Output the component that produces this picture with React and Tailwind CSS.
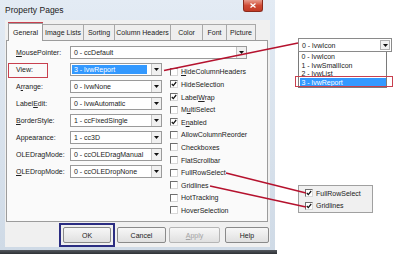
import React from "react";

const F = "font-['Liberation_Sans',Arial,sans-serif]";

function Arrow() {
  return (
    <svg width="5" height="3" viewBox="0 0 5 3">
      <path d="M0 0H5L2.5 3Z" fill="#111" />
    </svg>
  );
}

function Combo({ text, w, selected }) {
  return (
    <div className={`h-[13px] ${w} bg-white border border-[#9a9a9a] flex items-stretch`}>
      <div className="flex-1 flex items-stretch p-[1px] pr-[4px] min-w-0">
        <span
          className={`flex items-center pl-[2px] text-[7px] leading-none whitespace-nowrap ${
            selected ? "flex-1 bg-[#3399ff] text-white" : "text-[#222]"
          }`}
        >
          {text}
        </span>
      </div>
      <div className="w-[10px] bg-[#f0f0f0] border-l border-[#c4c4c4] flex items-center justify-center">
        <Arrow />
      </div>
    </div>
  );
}

function Check({ checked }) {
  return (
    <div className="w-[8px] h-[8px] bg-white border-t border-l border-[#6e6e6e] border-r border-b border-r-[#d8d8d8] border-b-[#d8d8d8] flex items-center justify-center shrink-0">
      {checked && (
        <svg width="6" height="6" viewBox="0 0 6 6">
          <path d="M0.8 3L2.3 4.6L5.2 1" stroke="#111" strokeWidth="1.2" fill="none" />
        </svg>
      )}
    </div>
  );
}

const leftRows = [
  { label: <><span>V</span>iew:</>, text: "3 - lvwReport", selected: true },
  { label: <>A<u>r</u>range:</>, text: "0 - lvwNone" },
  { label: <>Label<u>E</u>dit:</>, text: "0 - lvwAutomatic" },
  { label: <><u>B</u>orderStyle:</>, text: "1 - ccFixedSingle" },
  { label: <>Appearance:</>, text: "1 - cc3D" },
  { label: <>OLEDragMode:</>, text: "0 - ccOLEDragManual" },
  { label: <><u>O</u>LEDropMode:</>, text: "0 - ccOLEDropNone" },
];

const checks = [
  { label: <><u>H</u>ideColumnHeaders</>, c: false },
  { label: <>HideSelection</>, c: true },
  { label: <>Label<u>W</u>rap</>, c: true },
  { label: <>M<u>u</u>ltiSelect</>, c: false },
  { label: <>E<u>n</u>abled</>, c: true },
  { label: <>AllowColumnReorder</>, c: false },
  { label: <>Checkboxes</>, c: false },
  { label: <>FlatScrollbar</>, c: false },
  { label: <>FullRowSelect</>, c: false },
  { label: <>Gridlines</>, c: false },
  { label: <>HotTracking</>, c: false },
  { label: <>HoverSelection</>, c: false },
];

const tabs = [
  ["Image Lists", "w-[41px]"],
  ["Sorting", "w-[31px]"],
  ["Column Headers", "w-[56px]"],
  ["Color", "w-[32px]"],
  ["Font", "w-[24px]"],
  ["Picture", "w-[29px]"],
];

function Btn({ children, w, disabled }) {
  return (
    <div
      className={`h-[16px] ${w} rounded-[2px] border ${
        disabled ? "border-[#b5b5b5] text-[#a3a3a3]" : "border-[#8a8a8a] text-[#222]"
      } bg-gradient-to-b from-[#f7f7f7] to-[#e0e0e0] flex items-center justify-center text-[7px] leading-none`}
    >
      {children}
    </div>
  );
}

export default function App() {
  return (
    <div className={`relative w-[400px] h-[254px] bg-white overflow-hidden ${F}`}>
      <div className="flex flex-col w-[277px]">
        <div className="w-[275px] h-[250px] bg-gradient-to-b from-[#e3ebf4] to-[#cfdae6] flex flex-col">
          {/* title bar */}
          <div className="h-[20px] flex items-start">
            <span className="flex-1 pl-[5px] mt-[5px] text-[8.5px] leading-[10px] text-[#222]">Property Pages</span>
            <div className="mr-[12px] w-[20px] h-[12px] rounded-b-[3px] bg-gradient-to-b from-[#e79a8c] via-[#cf4b36] to-[#c23b26] border border-t-0 border-[#8c2a1c] flex items-center justify-center">
              <svg width="6" height="5" viewBox="0 0 6 5">
                <path d="M0.5 0.5L5.5 4.5M5.5 0.5L0.5 4.5" stroke="white" strokeWidth="1.3" />
              </svg>
            </div>
          </div>
          {/* body */}
          <div className="mx-[5px] h-[227px] bg-[#f0f0f0] flex flex-col">
            <div className="flex items-end h-[20px] pt-[2px] pl-[3px]">
              <div className="h-[18px] w-[35px] border border-b-0 border-[#9c9c9c] bg-[#fafafa] flex items-center justify-center text-[7px] leading-none text-[#222] -mb-px relative z-10">
                General
              </div>
              {tabs.map(([t, w]) => (
                <div
                  key={t}
                  className={`h-[16px] ${w} border-t border-r border-[#a8a8a8] bg-[#eeeeee] flex items-center justify-center text-[7px] leading-none text-[#222] whitespace-nowrap`}
                >
                  {t}
                </div>
              ))}
            </div>
            {/* tab page */}
            <div className="ml-[1px] w-[262px] h-[183px] border border-[#9c9c9c] bg-[#fafafa] flex flex-col pt-[3.5px] pl-[9px]">
              <div className="h-[17px] flex items-center">
                <span className="w-[54px] text-[7px] leading-none text-[#222]">
                  <u>M</u>ousePointer:
                </span>
                <Combo text="0 - ccDefault" w="w-[177px]" />
              </div>
              <div className="flex">
                <div className="flex flex-col w-[146px]">
                  {leftRows.map((r, i) => (
                    <div key={i} className="h-[17px] flex items-center">
                      <span className="w-[54px] text-[7px] leading-none text-[#222] whitespace-nowrap">{r.label}</span>
                      <Combo text={r.text} w="w-[92px]" selected={r.selected} />
                    </div>
                  ))}
                </div>
                <div className="flex flex-col ml-[8px] mt-[4.2px]">
                  {checks.map((c, i) => (
                    <div key={i} className="h-[12.6px] flex items-center gap-[3px]">
                      <Check checked={c.c} />
                      <span className="text-[7px] leading-none text-[#222] whitespace-nowrap">{c.label}</span>
                    </div>
                  ))}
                </div>
              </div>
            </div>
            {/* buttons */}
            <div className="flex items-center mt-[1px] pl-[54px]">
              <div className="border-2 border-[#2b2d82] p-[2px]">
                <Btn w="w-[48px]">OK</Btn>
              </div>
              <div className="ml-[2px]">
                <Btn w="w-[49px]">Cancel</Btn>
              </div>
              <div className="ml-[3px]">
                <Btn w="w-[51px]" disabled>
                  <u>A</u>pply
                </Btn>
              </div>
              <div className="ml-[5px]">
                <Btn w="w-[44px]">Help</Btn>
              </div>
            </div>
          </div>
        </div>
        <div className="h-[4px] w-[277px] bg-gradient-to-b from-[#55595f] to-[#2e3135]" />
      </div>

      {/* annotation boxes */}
      <div className="absolute left-[8px] top-[22px] w-[35px] h-[18px] border border-[#c8404f]" />
      <div className="absolute left-[8px] top-[63px] w-[40px] h-[15px] border border-[#c8404f]" />

      {/* callout: dropdown */}
      <div className="absolute left-[298px] top-[38px] w-[94px] flex flex-col">
        <div className="h-[14px] border border-[#8a8a8a] bg-white flex items-stretch">
          <span className="flex-1 flex items-center pl-[3px] text-[7px] leading-none text-[#222]">0 - lvwIcon</span>
          <div className="w-[10px] m-[1px] border border-[#b0b0b0] bg-[#f0f0f0] flex items-center justify-center">
            <Arrow />
          </div>
        </div>
        <div className="w-[89px] h-[36px] border border-[#7a7a7a] border-t-0 bg-white flex flex-col p-[0.5px]">
          {["0 - lvwIcon", "1 - lvwSmallIcon", "2 - lvwList", "3 - lvwReport"].map((t, i) => (
            <div
              key={t}
              className={`h-[8.6px] flex items-center pl-[2px] text-[7px] leading-none whitespace-nowrap ${
                i === 3 ? "bg-[#3399ff] text-white" : "text-[#222]"
              }`}
            >
              {t}
            </div>
          ))}
        </div>
      </div>
      <div className="absolute left-[295px] top-[76px] w-[98px] h-[11px] border border-[#c8404f]" />

      {/* callout: checkboxes */}
      <div className="absolute left-[298px] top-[185px] w-[75px] h-[28px] bg-[#f0f0f0] border border-[#a0a0a0] flex flex-col pt-[1px] pl-[6px]">
        <div className="h-[13px] flex items-center gap-[3px]">
          <Check checked />
          <span className="text-[7px] leading-none text-[#222]">FullRowSelect</span>
        </div>
        <div className="h-[13px] flex items-center gap-[3px]">
          <Check checked />
          <span className="text-[7px] leading-none text-[#222]">Gridlines</span>
        </div>
      </div>

      {/* red lines */}
      <svg className="absolute left-0 top-0 pointer-events-none" width="400" height="254" viewBox="0 0 400 254">
        <line x1="164" y1="70.5" x2="298" y2="43" stroke="#b5122e" strokeWidth="1.6" />
        <line x1="226" y1="173" x2="306" y2="193" stroke="#b5122e" strokeWidth="1.6" />
        <line x1="210" y1="186" x2="306" y2="207" stroke="#b5122e" strokeWidth="1.6" />
      </svg>
    </div>
  );
}
